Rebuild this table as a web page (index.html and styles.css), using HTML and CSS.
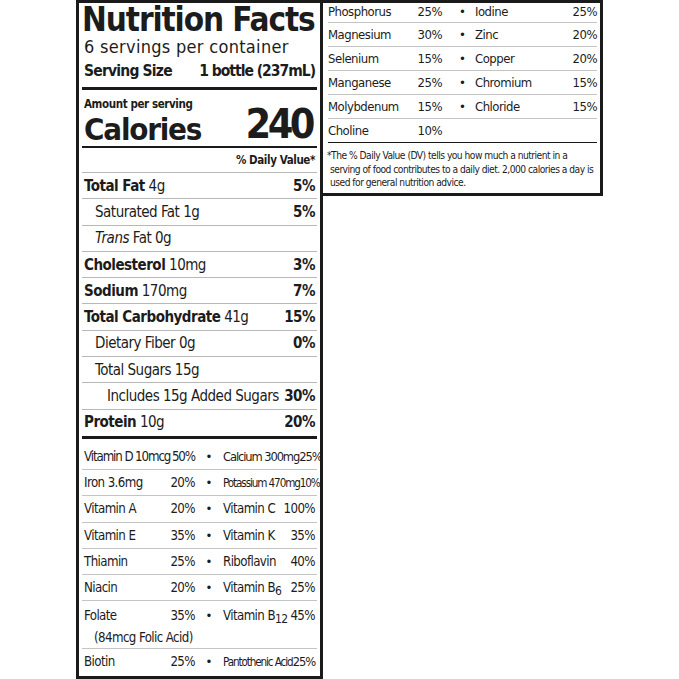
FILE: index.html
```
<!DOCTYPE html>
<html>
<head>
<meta charset="utf-8">
<link rel="stylesheet" href="styles.css">
</head>
<body>
<div class="page">
  <section class="nf">
    <h1 class="title">Nutrition Facts</h1>
    <div class="servings">6 servings per container</div>
    <div class="size"><span>Serving Size</span><span class="size-val">1 bottle (237mL)</span></div>
    <div class="cal">
      <div class="cal-left">
        <div class="aps">Amount per serving</div>
        <div class="cal-word">Calories</div>
      </div>
      <div class="cal-num">240</div>
    </div>
    <div class="dv">% Daily Value*</div>
    <div class="row"><span><b>Total Fat</b> 4g</span><b>5%</b></div>
    <div class="row ind1"><span>Saturated Fat 1g</span><b>5%</b></div>
    <div class="row ind1"><span><i>Trans</i> Fat 0g</span></div>
    <div class="row"><span><b>Cholesterol</b> 10mg</span><b>3%</b></div>
    <div class="row"><span><b>Sodium</b> 170mg</span><b>7%</b></div>
    <div class="row"><span><b>Total Carbohydrate</b> 41g</span><b>15%</b></div>
    <div class="row ind1"><span>Dietary Fiber 0g</span><b>0%</b></div>
    <div class="row ind1"><span>Total Sugars 15g</span></div>
    <div class="row ind2"><span>Includes 15g Added Sugars</span><b>30%</b></div>
    <div class="row"><span><b>Protein</b> 10g</span><b>20%</b></div>
    <div class="vits">
      <div class="vrow"><div class="half"><span class="tight">Vitamin D 10mcg</span><span class="tight">50%</span></div><span class="dot">•</span><div class="half"><span class="small">Calcium 300mg</span><span class="small">25%</span></div></div>
      <div class="vrow"><div class="half"><span>Iron 3.6mg</span><span>20%</span></div><span class="dot">•</span><div class="half"><span class="tiny">Potassium 470mg</span><span class="tiny">10%</span></div></div>
      <div class="vrow"><div class="half"><span>Vitamin A</span><span>20%</span></div><span class="dot">•</span><div class="half"><span>Vitamin C</span><span>100%</span></div></div>
      <div class="vrow"><div class="half"><span>Vitamin E</span><span>35%</span></div><span class="dot">•</span><div class="half"><span>Vitamin K</span><span>35%</span></div></div>
      <div class="vrow"><div class="half"><span>Thiamin</span><span>25%</span></div><span class="dot">•</span><div class="half"><span>Riboflavin</span><span>40%</span></div></div>
      <div class="vrow"><div class="half"><span>Niacin</span><span>20%</span></div><span class="dot">•</span><div class="half"><span>Vitamin B<span class="sub">6</span></span><span>25%</span></div></div>
      <div class="vrow tall"><div class="half"><span>Folate</span><span>35%</span></div><span class="dot">•</span><div class="half"><span>Vitamin B<span class="sub">12</span></span><span>45%</span></div><div class="folic">(84mcg Folic Acid)</div></div>
      <div class="vrow"><div class="half"><span>Biotin</span><span>25%</span></div><span class="dot">•</span><div class="half"><span class="tiny">Pantothenic Acid</span><span class="small">25%</span></div></div>
    </div>
  </section>
  <section class="side">
    <div class="srow"><span>Phosphorus</span><span class="pct">25%</span><span class="dot">•</span><span>Iodine</span><span class="pct">25%</span></div>
    <div class="srow"><span>Magnesium</span><span class="pct">30%</span><span class="dot">•</span><span>Zinc</span><span class="pct">20%</span></div>
    <div class="srow"><span>Selenium</span><span class="pct">15%</span><span class="dot">•</span><span>Copper</span><span class="pct">20%</span></div>
    <div class="srow"><span>Manganese</span><span class="pct">25%</span><span class="dot">•</span><span>Chromium</span><span class="pct">15%</span></div>
    <div class="srow"><span>Molybdenum</span><span class="pct">15%</span><span class="dot">•</span><span>Chloride</span><span class="pct">15%</span></div>
    <div class="srow last"><span>Choline</span><span class="pct">10%</span></div>
    <p class="foot">*The % Daily Value (DV) tells you how much a nutrient in a serving of food contributes to a daily diet. 2,000 calories a day is used for general nutrition advice.</p>
  </section>
</div>
</body>
</html>
```

FILE: styles.css
```
html, body {
  margin: 0;
  padding: 0;
  background: #fff;
}
body {
  font-family: "DejaVu Sans Condensed", "Liberation Sans Narrow", "Liberation Sans", sans-serif;
  font-stretch: condensed;
  color: #1c1c1c;
}
.page {
  display: flex;
  align-items: flex-start;
  padding-left: 76px;
}
.nf {
  width: 247px;
  height: 679px;
  box-sizing: border-box;
  border: 3px solid #1a1a1a;
  padding: 0 3px;
}
.title {
  margin: 0;
  font-size: 33px;
  line-height: 33px;
  font-weight: 900;
  letter-spacing: -1.1px;
  padding-left: 0;
  white-space: nowrap;
}
.servings {
  font-size: 18px;
  line-height: 18px;
  margin-top: 2px;
  padding-left: 2px;
  letter-spacing: 0.3px;
  white-space: nowrap;
}
.size {
  display: flex;
  justify-content: space-between;
  font-size: 15.5px;
  font-weight: bold;
  line-height: 31px;
  height: 31px;
  padding: 0 2px;
  letter-spacing: -0.8px;
  border-bottom: 3px solid #1a1a1a;
  white-space: nowrap;
}
.size-val { letter-spacing: -1px; }
.cal {
  display: flex;
  justify-content: space-between;
  align-items: flex-end;
  border-bottom: 2px solid #1a1a1a;
  padding: 0 1px 1px 2px;
  height: 58px;
  box-sizing: border-box;
}
.aps {
  font-size: 11.5px;
  font-weight: bold;
  line-height: 13px;
  letter-spacing: -0.4px;
  margin-bottom: 2px;
  white-space: nowrap;
}
.cal-word {
  font-size: 31px;
  font-weight: bold;
  line-height: 32px;
  letter-spacing: -1.2px;
}
.cal-num {
  font-size: 41px;
  font-weight: bold;
  line-height: 42px;
  letter-spacing: -3.5px;
  padding-right: 4px;
}
.dv {
  text-align: right;
  font-size: 11.5px;
  font-weight: bold;
  letter-spacing: -0.4px;
  line-height: 24px;
  height: 24px;
  padding-right: 2px;
}
.row {
  display: flex;
  justify-content: space-between;
  align-items: center;
  height: 26.3px;
  box-sizing: border-box;
  border-top: 1px solid #b8b8b8;
  font-size: 15px;
  letter-spacing: -0.5px;
  padding: 0 2px;
  white-space: nowrap;
}
.row b { font-weight: bold; }
.ind1 { padding-left: 13px; }
.ind2 { padding-left: 25px; }
.vits {
  border-top: 3px solid #1a1a1a;
  margin-top: 1px;
  padding-top: 4px;
}
.vrow {
  display: grid;
  grid-template-columns: 111px 28px 1fr;
  align-items: center;
  height: 26.2px;
  box-sizing: border-box;
  border-top: 1px solid #c4c4c4;
  font-size: 13.2px;
  letter-spacing: -0.6px;
  padding: 0 2px;
}
.vrow:first-child { border-top: none; }
.vrow.tall {
  height: 48px;
  grid-template-rows: 24px 20px;
  align-items: center;
  padding-top: 2px;
}
.folic {
  grid-column: 1 / -1;
  padding-left: 10px;
  white-space: nowrap;
}
.half {
  display: flex;
  justify-content: space-between;
  align-items: baseline;
  white-space: nowrap;
}
.dot {
  text-align: center;
  font-size: 13px;
  letter-spacing: 0;
}
.tight { letter-spacing: -1.1px; }
.small { font-size: 12.8px; letter-spacing: -1.1px; }
.tiny { font-size: 11.6px; letter-spacing: -1.1px; }
.sub {
  font-size: 12px;
  position: relative;
  top: 3px;
}
.side {
  width: 280px;
  box-sizing: border-box;
  border: 3px solid #1a1a1a;
  border-left: none;
  padding: 0 3px 0 5px;
}
.srow {
  display: grid;
  grid-template-columns: 70px 44px 33px 1fr 40px;
  align-items: center;
  height: 24px;
  box-sizing: border-box;
  border-top: 1px solid #c4c4c4;
  font-size: 13px;
  letter-spacing: -0.5px;
  white-space: nowrap;
}
.srow:first-child { border-top: none; height: 19px; padding-bottom: 2px; }
.srow.last { border-bottom: 1px solid #1a1a1a; height: 25px; }
.srow .pct { text-align: right; }
.side .dot { text-align: left; padding-left: 17px; }
.foot {
  margin: 0 0 0 -1px;
  padding: 6px 0 3px 3px;
  text-indent: -3px;
  font-size: 10.2px;
  letter-spacing: -0.52px;
  line-height: 13.5px;
}
```
